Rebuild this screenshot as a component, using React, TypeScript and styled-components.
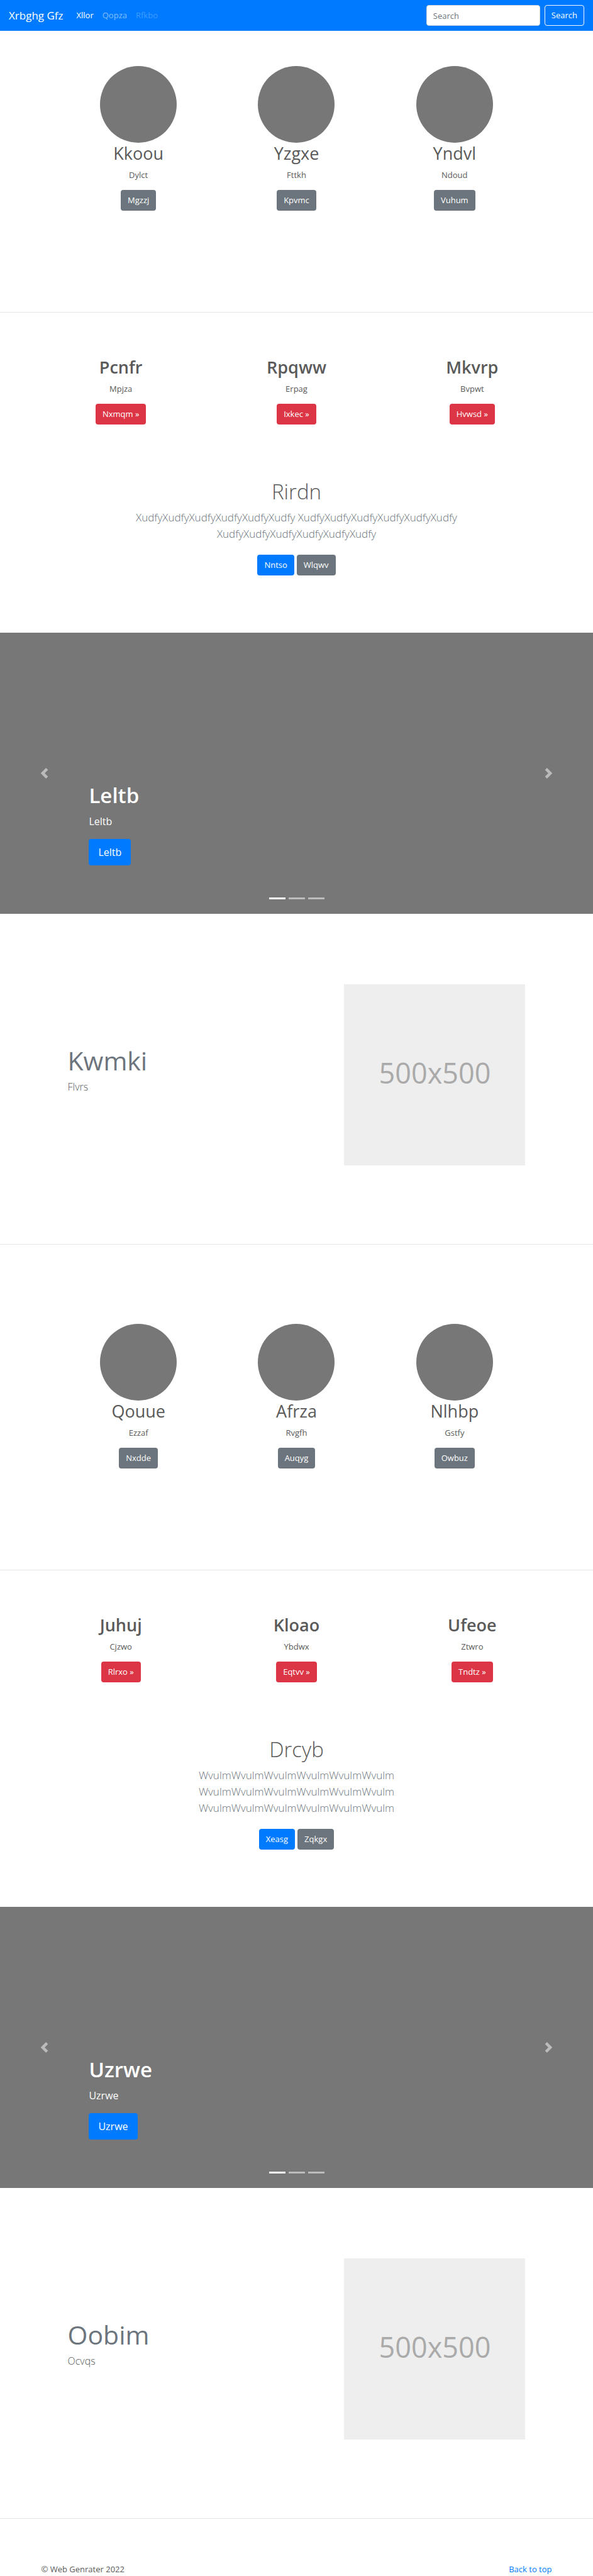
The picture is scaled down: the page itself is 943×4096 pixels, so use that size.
import React from "react";
import styled, { createGlobalStyle, css } from "styled-components";

const GlobalStyle = createGlobalStyle`
  *, *::before, *::after { box-sizing: border-box; }
  body {
    margin: 0;
    background: #fff;
    color: #5a5a5a;
    font-family: "Open Sans", "Noto Sans", sans-serif;
    font-size: 13px;
    line-height: 21px;
  }
  h1, h2, p { margin: 0; }
`;

type Tone = "primary" | "secondary" | "danger";

const tones: Record<Tone, string> = {
  primary: "#007bff",
  secondary: "#6c757d",
  danger: "#dc3545",
};

const buttonShape = css`
  display: inline-flex;
  align-items: center;
  justify-content: center;
  height: 33px;
  padding: 0 10px;
  border: 1px solid transparent;
  border-radius: 4px;
  color: #fff;
  font: inherit;
  text-decoration: none;
  white-space: nowrap;
  cursor: pointer;
`;

const ButtonLink = styled.a<{ $tone: Tone; $large?: boolean }>`
  ${buttonShape}
  background: ${(p) => tones[p.$tone]};
  ${(p) =>
    p.$large &&
    css`
      height: 42px;
      padding: 0 14px;
      font-size: 16px;
    `}
`;

const Navbar = styled.nav`
  display: flex;
  align-items: center;
  padding: 8px 14px;
  background: #007bff;
`;

const Brand = styled.a`
  margin-right: 14px;
  color: #fff;
  font-size: 17px;
  text-decoration: none;
`;

const NavLinks = styled.ul`
  display: flex;
  flex: 1;
  margin: 0;
  padding: 0;
  list-style: none;
`;

const NavLink = styled.a<{ $opacity: number }>`
  padding: 0 7px;
  color: rgba(255, 255, 255, ${(p) => p.$opacity});
  text-decoration: none;
`;

const SearchForm = styled.form`
  display: flex;
  gap: 7px;
`;

const SearchInput = styled.input`
  width: 181px;
  height: 33px;
  padding: 0 10px;
  border: 1px solid #ced4da;
  border-radius: 4px;
  background: #fff;
  color: #495057;
  font: inherit;
  &::placeholder { color: #6c757d; opacity: 1; }
`;

const SearchButton = styled.button`
  ${buttonShape}
  border-color: #f8f9fa;
  background: transparent;
`;

const Divider = styled.hr`
  height: 1px;
  margin: 0;
  border: 0;
  background: #e5e5e5;
`;

const Columns = styled.div<{ $max: number }>`
  display: grid;
  grid-template-columns: repeat(3, 1fr);
  max-width: ${(p) => p.$max}px;
  margin: 0 auto;
`;

const Column = styled.div`
  display: flex;
  flex-direction: column;
  align-items: center;
  text-align: center;
`;

const Circle = styled.div`
  width: 122px;
  height: 122px;
  border-radius: 50%;
  background: #777;
`;

const ColumnTitle = styled.h2<{ $bold?: boolean }>`
  margin-bottom: 7px;
  font-size: 27px;
  font-weight: ${(p) => (p.$bold ? 600 : 400)};
  line-height: 34px;
`;

const ColumnText = styled.p`
  margin-bottom: 13px;
`;

const Marketing = styled.section<{ $top: number }>`
  padding: ${(p) => p.$top}px 0 161px;
`;

const Services = styled.section`
  padding: 70px 0 86px;
`;

const Intro = styled.section`
  display: flex;
  flex-direction: column;
  align-items: center;
  padding-bottom: 91px;
  text-align: center;
`;

const IntroTitle = styled.h1`
  margin-bottom: 7px;
  font-size: 33px;
  font-weight: 300;
  line-height: 42px;
`;

const Lead = styled.p`
  max-width: 560px;
  margin-bottom: 20px;
  color: #6c757d;
  font-size: 17px;
  font-weight: 300;
  line-height: 26px;
`;

const ButtonRow = styled.div`
  display: flex;
  gap: 4px;
`;

const CarouselFrame = styled.section`
  position: relative;
  display: flex;
  flex-direction: column;
  align-items: flex-start;
  justify-content: flex-end;
  height: 447px;
  padding: 0 15% 77px;
  background: #777;
  color: #fff;
`;

const CaptionTitle = styled.h1`
  margin-bottom: 7px;
  font-size: 33px;
  font-weight: 600;
  line-height: 42px;
`;

const CaptionText = styled.p`
  margin-bottom: 15px;
  font-size: 16px;
  line-height: 26px;
`;

const CarouselControl = styled.button<{ $side: "left" | "right" }>`
  position: absolute;
  top: 0;
  bottom: 0;
  ${(p) => p.$side}: 0;
  display: flex;
  align-items: center;
  justify-content: center;
  width: 15%;
  padding: 0;
  border: 0;
  background: none;
  color: #fff;
  opacity: 0.5;
  cursor: pointer;
`;

const Indicators = styled.div`
  position: absolute;
  right: 0;
  bottom: 23px;
  left: 0;
  display: flex;
  justify-content: center;
  gap: 5px;
`;

const Indicator = styled.button<{ $active?: boolean }>`
  width: 26px;
  height: 3px;
  padding: 0;
  border: 0;
  background: #fff;
  opacity: ${(p) => (p.$active ? 1 : 0.5)};
  cursor: pointer;
`;

const FeaturetteRow = styled.section`
  display: grid;
  grid-template-columns: 7fr 5fr;
  align-items: center;
  max-width: 754px;
  margin: 0 auto;
  padding: 112px 0 125px;
`;

const FeaturetteBody = styled.div`
  padding: 0 13px;
`;

const FeaturetteTitle = styled.h2`
  margin-bottom: 4px;
  color: #6c757d;
  font-size: 41px;
  font-weight: 400;
  line-height: 50px;
`;

const FeaturetteText = styled.p`
  margin-bottom: 17px;
  font-size: 16px;
  font-weight: 300;
  line-height: 26px;
`;

const Placeholder = styled.div`
  display: flex;
  align-items: center;
  justify-content: center;
  aspect-ratio: 1;
  margin: 0 13px;
  padding-bottom: 6px;
  background: #eee;
  color: #aaa;
  font-size: 45px;
  line-height: 62px;
`;

const FooterBar = styled.footer`
  display: flex;
  justify-content: space-between;
  max-width: 812px;
  margin: 0 auto;
  padding-top: 70px;
`;

const FooterLink = styled.a`
  color: #007bff;
  text-decoration: none;
`;

type Item = { title: string; text: string; action: string };

function ItemColumns({ items, round }: { items: Item[]; round?: boolean }) {
  return (
    <Columns $max={round ? 754 : 838}>
      {items.map((item) => (
        <Column key={item.title}>
          {round && <Circle />}
          <ColumnTitle $bold={!round}>{item.title}</ColumnTitle>
          <ColumnText>{item.text}</ColumnText>
          <ButtonLink href="#" $tone={round ? "secondary" : "danger"}>
            {item.action}
          </ButtonLink>
        </Column>
      ))}
    </Columns>
  );
}

function IntroBlock(props: { title: string; text: string; primary: string; secondary: string }) {
  return (
    <Intro>
      <IntroTitle>{props.title}</IntroTitle>
      <Lead>{props.text}</Lead>
      <ButtonRow>
        <ButtonLink href="#" $tone="primary">{props.primary}</ButtonLink>
        <ButtonLink href="#" $tone="secondary">{props.secondary}</ButtonLink>
      </ButtonRow>
    </Intro>
  );
}

function Carousel({ label }: { label: string }) {
  return (
    <CarouselFrame>
      <CaptionTitle>{label}</CaptionTitle>
      <CaptionText>{label}</CaptionText>
      <ButtonLink href="#" $tone="primary" $large>{label}</ButtonLink>
      <CarouselControl $side="left" aria-label="Previous">
        <svg width="17" height="17" viewBox="0 0 8 8" fill="currentColor">
          <path d="M5.25 0l-4 4 4 4 1.5-1.5L4.25 4l2.5-2.5L5.25 0z" />
        </svg>
      </CarouselControl>
      <CarouselControl $side="right" aria-label="Next">
        <svg width="17" height="17" viewBox="0 0 8 8" fill="currentColor">
          <path d="M2.75 0l-1.5 1.5L3.75 4l-2.5 2.5L2.75 8l4-4-4-4z" />
        </svg>
      </CarouselControl>
      <Indicators>
        <Indicator $active aria-label="Slide 1" />
        <Indicator aria-label="Slide 2" />
        <Indicator aria-label="Slide 3" />
      </Indicators>
    </CarouselFrame>
  );
}

function Featurette({ title, text }: { title: string; text: string }) {
  return (
    <FeaturetteRow>
      <FeaturetteBody>
        <FeaturetteTitle>{title}</FeaturetteTitle>
        <FeaturetteText>{text}</FeaturetteText>
      </FeaturetteBody>
      <Placeholder>500x500</Placeholder>
    </FeaturetteRow>
  );
}

export default function App() {
  return (
    <>
      <GlobalStyle />
      <Navbar>
        <Brand href="#">Xrbghg Gfz</Brand>
        <NavLinks>
          <li><NavLink href="#" $opacity={1}>Xllor</NavLink></li>
          <li><NavLink href="#" $opacity={0.5}>Qopza</NavLink></li>
          <li><NavLink href="#" $opacity={0.25}>Rfkbo</NavLink></li>
        </NavLinks>
        <SearchForm onSubmit={(e) => e.preventDefault()}>
          <SearchInput type="text" placeholder="Search" aria-label="Search" />
          <SearchButton type="submit">Search</SearchButton>
        </SearchForm>
      </Navbar>
      <main>
        <Marketing $top={56}>
          <ItemColumns
            round
            items={[
              { title: "Kkoou", text: "Dylct", action: "Mgzzj" },
              { title: "Yzgxe", text: "Fttkh", action: "Kpvmc" },
              { title: "Yndvl", text: "Ndoud", action: "Vuhum" },
            ]}
          />
        </Marketing>
        <Divider />
        <Services>
          <ItemColumns
            items={[
              { title: "Pcnfr", text: "Mpjza", action: "Nxmqm »" },
              { title: "Rpqww", text: "Erpag", action: "Ixkec »" },
              { title: "Mkvrp", text: "Bvpwt", action: "Hvwsd »" },
            ]}
          />
        </Services>
        <IntroBlock
          title="Rirdn"
          text="XudfyXudfyXudfyXudfyXudfyXudfy XudfyXudfyXudfyXudfyXudfyXudfy XudfyXudfyXudfyXudfyXudfyXudfy"
          primary="Nntso"
          secondary="Wlqwv"
        />
        <Carousel label="Leltb" />
        <Featurette title="Kwmki" text="Flvrs" />
        <Divider />
        <Marketing $top={126}>
          <ItemColumns
            round
            items={[
              { title: "Qouue", text: "Ezzaf", action: "Nxdde" },
              { title: "Afrza", text: "Rvgfh", action: "Auqyg" },
              { title: "Nlhbp", text: "Gstfy", action: "Owbuz" },
            ]}
          />
        </Marketing>
        <Divider />
        <Services>
          <ItemColumns
            items={[
              { title: "Juhuj", text: "Cjzwo", action: "Rlrxo »" },
              { title: "Kloao", text: "Ybdwx", action: "Eqtvv »" },
              { title: "Ufeoe", text: "Ztwro", action: "Tndtz »" },
            ]}
          />
        </Services>
        <IntroBlock
          title="Drcyb"
          text="WvulmWvulmWvulmWvulmWvulmWvulm WvulmWvulmWvulmWvulmWvulmWvulm WvulmWvulmWvulmWvulmWvulmWvulm"
          primary="Xeasg"
          secondary="Zqkgx"
        />
        <Carousel label="Uzrwe" />
        <Featurette title="Oobim" text="Ocvqs" />
        <Divider />
      </main>
      <FooterBar>
        <p>© Web Genrater 2022</p>
        <FooterLink href="#">Back to top</FooterLink>
      </FooterBar>
    </>
  );
}
